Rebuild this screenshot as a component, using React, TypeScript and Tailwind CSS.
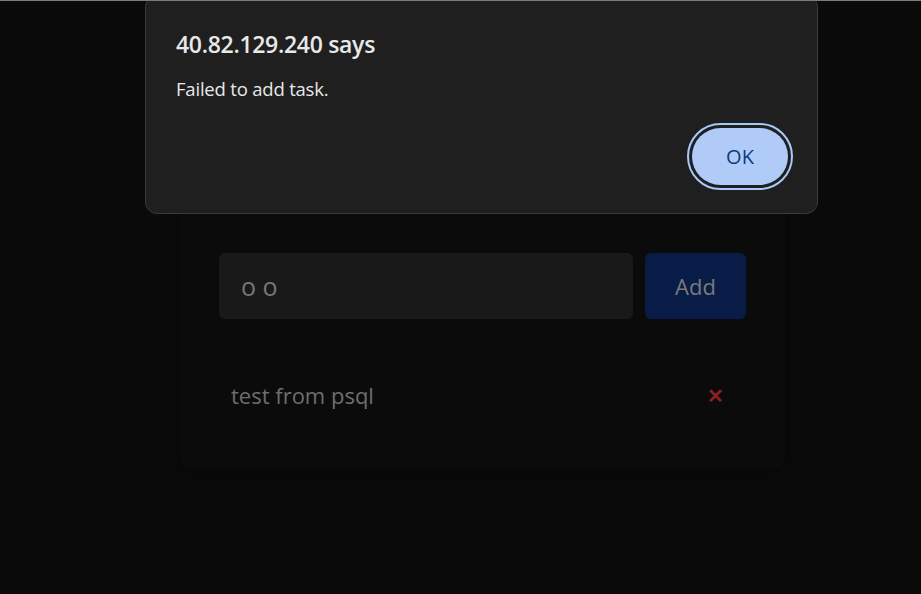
import React from "react";

const tasks = ["test from psql"];

export default function App() {
  return (
    <div className="relative min-h-[594px] w-full overflow-hidden border-t border-[#7c7c7c] bg-[#0a0a0a] font-['Open_Sans',sans-serif]">
      <div className="pt-[81px]">
        <div className="ml-[180px] w-[605px] rounded-xl bg-[#0b0b0b] px-[39px] pb-[47px] pt-[88px] shadow-[0_0_14px_rgba(0,0,0,0.35)]">
          <h1 className="mb-[37px] pl-[44px] text-center text-[34px] font-bold leading-[46px] text-[#5a5a5a]">Task Manager</h1>
          <form className="flex gap-3" onSubmit={(e) => e.preventDefault()}>
            <input
              defaultValue="o o"
              className="h-[66px] flex-1 rounded-md bg-[#191919] px-[22px] text-[25px] text-[#777] outline-none"
            />
            <button type="submit" className="h-[66px] w-[101px] rounded-md bg-[#081c47] text-[22px] text-[#7a7a7a]">
              Add
            </button>
          </form>
          <ul className="mt-[50px]">
            {tasks.map((t) => (
              <li key={t} className="flex items-center justify-between py-[10px] pl-3 pr-[22px]">
                <span className="text-[22px] text-[#6e6e6e]">{t}</span>
                <button className="text-[20px] font-semibold leading-none text-[#8b2020]">✕</button>
              </li>
            ))}
          </ul>
        </div>
      </div>

      <div className="absolute left-[145px] top-[-6px] w-[673px] rounded-xl border border-[#3a3a3a] bg-[#1f1f1f] px-[30px] pb-[23px] pt-[33px] text-[#e8e8e8]">
        <div className="text-[23px] font-semibold leading-[30px] tracking-[-0.3px]">40.82.129.240 says</div>
        <div className="mt-[18px] text-[18.5px] leading-[24px] tracking-[-0.2px]">Failed to add task.</div>
        <div className="mt-[22px] flex justify-end">
          <div className="-mr-[6px] rounded-full border-2 border-[#a8c7fa] p-[3px]">
            <button className="h-[57px] w-[96px] rounded-full bg-[#b0cbf7] text-[20px] font-medium text-[#0b3a80]">
              OK
            </button>
          </div>
        </div>
      </div>
    </div>
  );
}
